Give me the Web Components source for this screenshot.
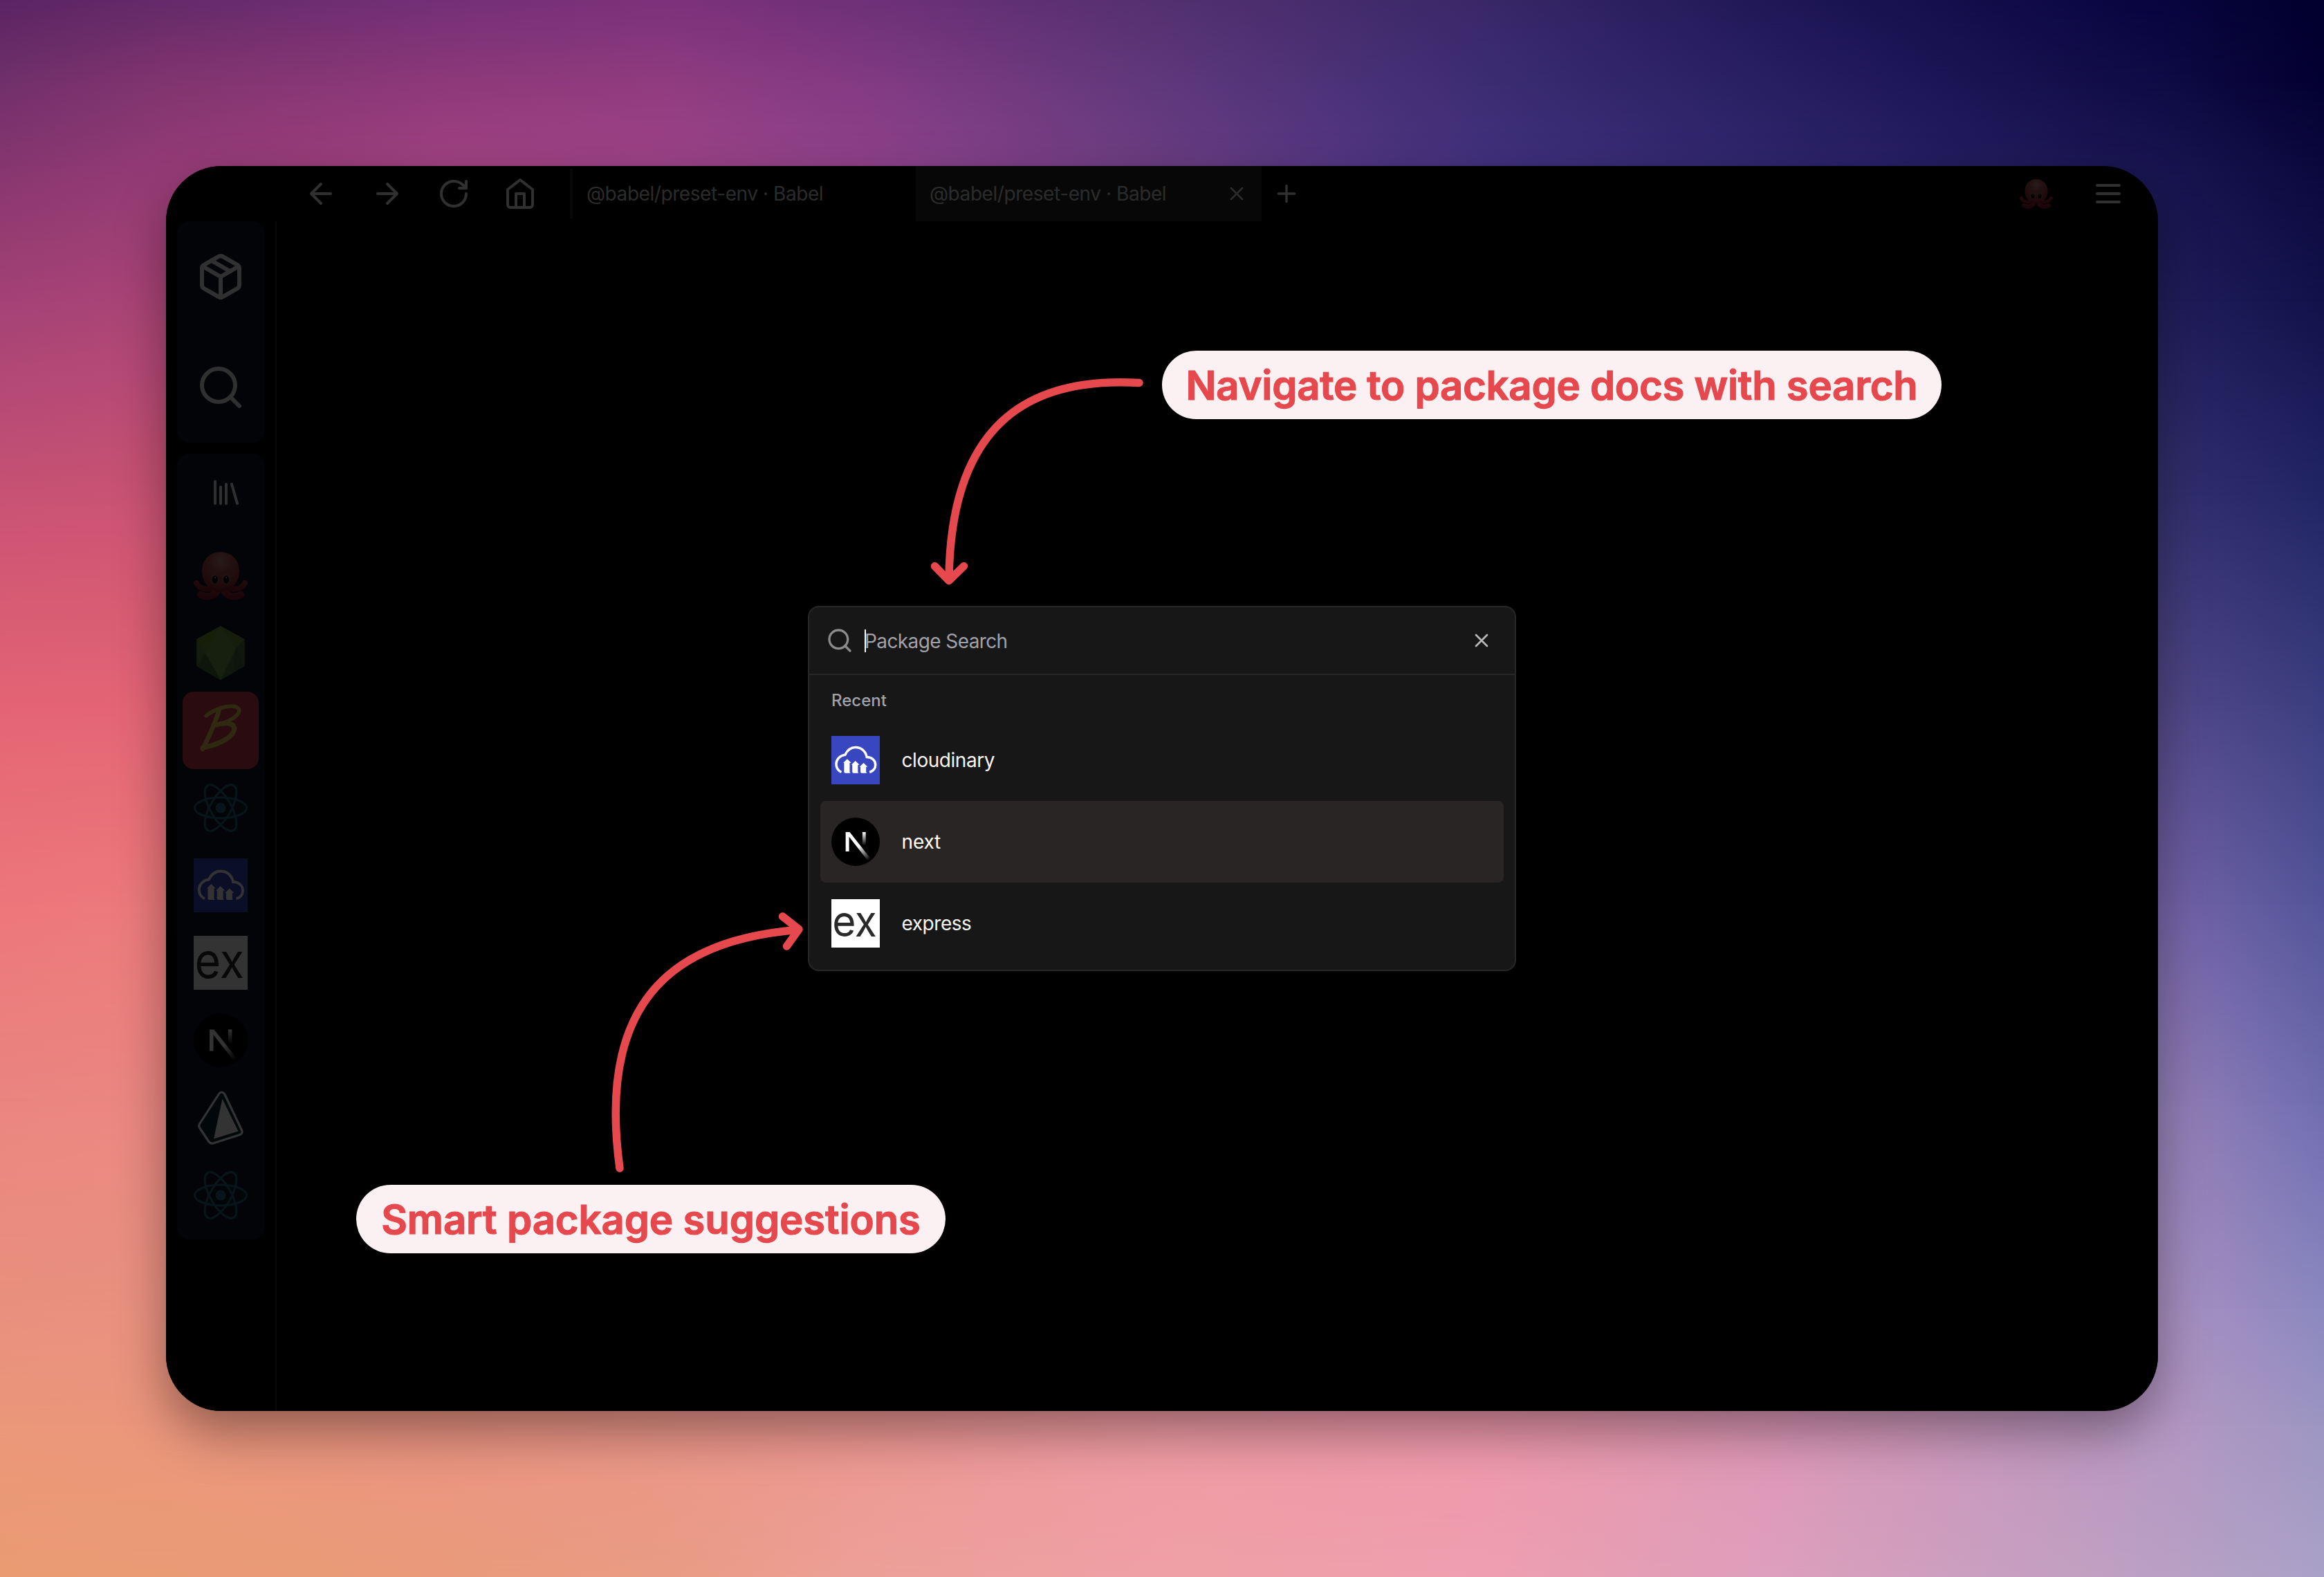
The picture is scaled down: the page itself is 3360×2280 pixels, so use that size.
<!DOCTYPE html>
<html lang="en">
<head>
<meta charset="utf-8">
<title>Package Search</title>
<style>
  html, body { margin: 0; height: 100%; }
  body { width: 3360px; height: 2280px; overflow: hidden; background: #000; font-family: Inter, "Liberation Sans", sans-serif; }
</style>
</head>
<body>
<promo-stage>
  <app-window>
    <tool-bar slot="toolbar">
      <ui-icon slot="nav" name="back"></ui-icon>
      <ui-icon slot="nav" name="forward"></ui-icon>
      <ui-icon slot="nav" name="reload"></ui-icon>
      <ui-icon slot="nav" name="home"></ui-icon>
      <browser-tab slot="tabs">@babel/preset-env · Babel</browser-tab>
      <browser-tab slot="tabs" active>@babel/preset-env · Babel</browser-tab>
      <ui-icon slot="tabs" name="plus" style="--size:40px;margin-left:16px"></ui-icon>
      <pkg-logo slot="end" name="octopus" style="--size:48px"></pkg-logo>
      <ui-icon slot="end" name="menu"></ui-icon>
    </tool-bar>
    <side-bar slot="sidebar">
      <ui-icon slot="main" name="package" style="--size:72px"></ui-icon>
      <ui-icon slot="main" name="search" style="--size:72px"></ui-icon>
      <ui-icon slot="library" name="library"></ui-icon>
      <side-item name="octopus"></side-item>
      <side-item name="node"></side-item>
      <side-item name="babel" active></side-item>
      <side-item name="react"></side-item>
      <side-item name="cloudinary"></side-item>
      <side-item name="express"></side-item>
      <side-item name="next"></side-item>
      <side-item name="prisma"></side-item>
      <side-item name="react"></side-item>
    </side-bar>
    <search-dialog slot="dialog" placeholder="Package Search" heading="Recent">
      <result-row name="cloudinary">cloudinary</result-row>
      <result-row name="next" selected>next</result-row>
      <result-row name="express">express</result-row>
    </search-dialog>
  </app-window>
  <call-out slot="notes" style="left:1680px;top:507px;width:1127px;letter-spacing:-.24px">Navigate to package docs with search</call-out>
  <call-out slot="notes" style="left:515px;top:1713px;width:852px;letter-spacing:-.1px">Smart package suggestions</call-out>
  <curved-arrow slot="notes" style="left:1320px;top:520px" w="360" h="350" line="M327 33.500C180 25 55 80 52 316" head="M31.500 298.500L52 319.500L73.500 298.500"></curved-arrow>
  <curved-arrow slot="notes" style="left:860px;top:1300px" w="320" h="420" line="M36 389C4 155 105 60 292 44.500" head="M271.500 25L295 43.500L277.500 68"></curved-arrow>
</promo-stage>

<script>
const define = (tag, html, setup) => {
  const tpl = document.createElement('template');
  tpl.innerHTML = html;
  customElements.define(tag, class extends HTMLElement {
    constructor() {
      super();
      this.attachShadow({ mode: 'open' }).append(tpl.content.cloneNode(true));
    }
    connectedCallback() { if (setup) setup(this, this.shadowRoot); }
  });
};

const ICONS = {
  back: '<path d="M19 12H5M12 19l-7-7 7-7"/>',
  forward: '<path d="M5 12h14M12 5l7 7-7 7"/>',
  reload: '<path d="M21 12a9 9 0 1 1-9-9c2.520 0 4.930 1 6.740 2.740L21 8"/><path d="M21 3v5h-5"/>',
  home: '<path d="m3 9 9-7 9 7v11a2 2 0 0 1-2 2H5a2 2 0 0 1-2-2z"/><path d="M9 22V12h6v10"/>',
  plus: '<path d="M5 12h14M12 5v14"/>',
  close: '<path d="M18 6 6 18M6 6l12 12"/>',
  menu: '<path d="M4 6h16M4 12h16M4 18h16"/>',
  search: '<circle cx="11" cy="11" r="8"/><path d="m21 21-4.350-4.350"/>',
  library: '<path d="m16 6 4 14M12 6v14M8 8v12M4 4v16"/>',
  package: '<path d="M16.500 9.400 7.500 4.210"/><path d="M21 16V8a2 2 0 0 0-1-1.730l-7-4a2 2 0 0 0-2 0l-7 4A2 2 0 0 0 3 8v8a2 2 0 0 0 1 1.730l7 4a2 2 0 0 0 2 0l7-4A2 2 0 0 0 21 16z"/><path d="M3.270 6.960 12 12.010l8.730-5.050M12 22.080V12"/>'
};

define('ui-icon', `
  <style>
    :host { display: block; width: var(--size, 48px); height: var(--size, 48px); color: #f0f0f0; flex: none; }
    svg { display: block; width: 100%; height: 100%; overflow: visible; fill: none; stroke: currentColor; stroke-width: 2; stroke-linecap: round; stroke-linejoin: round; }
  </style>
  <svg viewBox="0 0 24 24"></svg>`,
  (el, root) => { root.querySelector('svg').innerHTML = ICONS[el.getAttribute('name')]; });

const LOGOS = {
  octopus: `
    <defs>
      <radialGradient id="h" cx=".5" cy=".22" r=".75"><stop offset="0" stop-color="#c48a84"/><stop offset=".35" stop-color="#ad5654"/><stop offset=".8" stop-color="#a0343c"/><stop offset="1" stop-color="#7c202b"/></radialGradient>
      <linearGradient id="t" x1="0" y1="0" x2="0" y2="1"><stop offset="0" stop-color="#a02c37"/><stop offset="1" stop-color="#8c1c2b"/></linearGradient>
    </defs>
    <g fill="none" stroke="url(#t)" stroke-linecap="round" stroke-linejoin="round">
      <path stroke-width="8" d="M4 50C8 58 16 60 30 58M74 50C70 58 62 60 48 58"/>
      <path stroke-width="10" d="M10 67C18 71 28 70 33 63M68 67C60 71 50 70 45 63"/>
    </g>
    <path fill="url(#h)" d="M39 5C55 5 66 17 66 32C66 46 60 52 55 57C50 65 28 65 23 57C18 52 12 46 12 32C12 17 23 5 39 5z"/>
    <g fill="#8f6f68"><ellipse cx="30.500" cy="44.500" rx="5.600" ry="7"/><ellipse cx="47.500" cy="44.500" rx="5.600" ry="7"/></g>
    <g fill="#0a0505"><ellipse cx="30.800" cy="45" rx="4.200" ry="5.700"/><ellipse cx="47.200" cy="45" rx="4.200" ry="5.700"/></g>
    <g fill="#bbb"><circle cx="31" cy="42" r="1.100"/><circle cx="47" cy="42" r="1.100"/></g>`,
  node: `
    <path fill="#6f983a" d="M39 0 73.500 19V58L39 78 4.500 58V19z"/>
    <path fill="#7a9c56" d="M39 0 62 35 39 78 13 29z" opacity=".6"/>
    <path fill="#628740" d="M4.500 19 39 78 4.500 58z"/>
    <path fill="#446d36" d="M17 40 39 78 4.500 58z"/>
    <path fill="#527b43" d="M62 30 73.500 19V58L39 78z"/>
    <path fill="#40693d" d="M62 30 73.500 58 56 68z"/>
    <path fill="#6d9536" d="M39 0 4.500 19 18 37z"/>`,
  babel: `
    <g fill="none" stroke="#e6cc50" stroke-linecap="round" stroke-linejoin="round">
      <path stroke-width="5.500" d="M18 18C30 8 48 2 60 4.500C74 9 62 24 33 31"/>
      <path stroke-width="7" d="M33 31C50 26 62 30 58 40C53 52 33 60 13 64"/>
      <path stroke-width="6.500" d="M37 9C32 26 24 44 13 66"/>
    </g>`,
  react: `
    <g fill="none" stroke="#276880" stroke-width="3.200">
      <ellipse cx="39" cy="39" rx="37.500" ry="15"/>
      <ellipse cx="39" cy="39" rx="37.500" ry="15" transform="rotate(60 39 39)"/>
      <ellipse cx="39" cy="39" rx="37.500" ry="15" transform="rotate(120 39 39)"/>
    </g>
    <circle cx="39" cy="39" r="7.500" fill="#276880"/>`,
  cloudinary: `
    <path fill="#3847c0" d="M0 0h78v78H0z"/>
    <path fill="none" stroke="#fff" stroke-width="3.900" d="M16 58.500C10 55.500 7.500 50 7.800 44.500C8.400 37 14 31.500 22 30.500C26 22.500 32 18.500 39 18.500C47.500 18.500 55 24 57 34C65 34 71 39.500 71 46.500C71 52.500 67.500 56.500 61.500 58.500"/>
    <g fill="#fff">
      <path d="M25.500 37 32 43.500H29.500V58a2 2 0 0 0 2 2H22.500a2 2 0 0 1-2-2V43.500H19z"/>
      <path d="M38.700 40 45.200 46.500H42.700V58a2 2 0 0 0 2 2H35.700a2 2 0 0 1-2-2V46.500H32.200z"/>
      <path d="M51.900 43.500 58.400 50H55.900V58a2 2 0 0 0 2 2H48.900a2 2 0 0 1-2-2V50H45.400z"/>
    </g>`,
  express: `
    <path fill="#fff" d="M0 0h78v78H0z"/>
    <text x="1.500" y="60.500" font-family="Inter, sans-serif" font-weight="400" font-size="70" textLength="71.500" lengthAdjust="spacingAndGlyphs" fill="#2a2a2a">ex</text>`,
  next: `
    <defs>
      <linearGradient id="d" gradientUnits="userSpaceOnUse" x1="44" y1="46" x2="61" y2="68"><stop offset="0" stop-color="#fff"/><stop offset="1" stop-color="#fff" stop-opacity="0"/></linearGradient>
      <linearGradient id="v" x1="0" y1="0" x2="0" y2="1"><stop offset="0" stop-color="#fff"/><stop offset="1" stop-color="#fff" stop-opacity="0"/></linearGradient>
    </defs>
    <circle cx="39" cy="39" r="39"/>
    <path fill="url(#d)" d="M23 23.400h6.500L63.500 66.500 59 70 28.500 31V54.600H23z"/>
    <path fill="url(#v)" d="M50 23.400h5.400V45H50z"/>`,
  prisma: `
    <path fill="#0c2434" stroke="#fff" stroke-width="3.200" stroke-linejoin="round" d="M36.500 4.500Q40.500-.5 44.500 4.500L69.500 57Q71.500 61.500 67 63.500L28 76Q24.500 77 21.500 73L8.500 53.500Q7 50.500 8.500 48z"/>
    <path fill="#fff" d="M41.500 11.500 64.500 58.500 29 69.500z"/>`
};

define('pkg-logo', `
  <style>
    :host { display: block; width: var(--size, 78px); height: var(--size, 78px); flex: none; }
    svg { display: block; width: 100%; height: 100%; overflow: visible; }
  </style>
  <svg viewBox="0 0 78 78"></svg>`,
  (el, root) => { root.querySelector('svg').innerHTML = LOGOS[el.getAttribute('name')]; });

define('browser-tab', `
  <style>
    :host { display: flex; align-items: center; box-sizing: border-box; width: 500px; height: 80px; flex: none; color: #d6d6d6; font-size: 28px; letter-spacing: -.43px; white-space: nowrap; }
    i { width: 4px; height: 72px; background: #262626; margin-right: 20px; }
    span { flex: 1; }
    ui-icon { display: none; --size: 32px; color: #d6d6d6; margin-right: 20px; }
    :host([active]) { background: #262626; }
    :host([active]) i { width: 0; }
    :host([active]) ui-icon { display: block; }
  </style>
  <i></i><span><slot></slot></span><ui-icon name="close"></ui-icon>`);

define('tool-bar', `
  <style>
    :host { display: flex; align-items: center; height: 80px; padding: 0 48px 0 200px; }
    .nav { display: flex; gap: 48px; margin-right: 48px; }
    .tabs { display: flex; align-items: center; flex: 1; }
    .end { display: flex; align-items: center; gap: 56px; }
  </style>
  <div class="nav"><slot name="nav"></slot></div>
  <div class="tabs"><slot name="tabs"></slot></div>
  <div class="end"><slot name="end"></slot></div>`);

define('side-item', `
  <style>
    :host { display: flex; align-items: center; justify-content: center; width: 110px; height: 112px; border-radius: 16px; }
    :host([active]) { background: #d0374f; }
  </style>
  <pkg-logo></pkg-logo>`,
  (el, root) => {
    const logo = document.createElement('pkg-logo');
    logo.setAttribute('name', el.getAttribute('name'));
    root.querySelector('pkg-logo').replaceWith(logo);
  });

define('side-bar', `
  <style>
    :host { display: flex; flex-direction: column; gap: 16px; box-sizing: border-box; width: 160px; height: 100%; padding: 0 16px; border-right: 2px solid #2c2c2c; }
    section { display: flex; flex-direction: column; align-items: center; width: 126px; border-radius: 16px; background: #0c1424; }
    .main { height: 320px; justify-content: space-around; }
    .list { padding-bottom: 8px; }
    .lib { display: flex; align-items: center; justify-content: center; height: 112px; margin-bottom: 8px; padding-left: 15px; }
  </style>
  <section class="main"><slot name="main"></slot></section>
  <section class="list"><div class="lib"><slot name="library"></slot></div><slot></slot></section>`);

define('result-row', `
  <style>
    :host { display: flex; align-items: center; gap: 31.500px; height: 118px; padding: 0 16px; border-radius: 8px; color: #f5f5f5; font-size: 28px; letter-spacing: -.45px; }
    :host([selected]) { background: #292524; color: #fff; letter-spacing: -.16px; }
    pkg-logo { --size: 70px; }
  </style>
  <slot name="logo"></slot><slot></slot>`,
  (el, root) => {
    const logo = document.createElement('pkg-logo');
    logo.setAttribute('name', el.getAttribute('name'));
    root.querySelector('slot').replaceWith(logo);
  });

define('search-dialog', `
  <style>
    :host { display: block; box-sizing: border-box; width: 1024px; height: 528px; border: 2px solid #272727; border-radius: 16px; background: #171717; overflow: hidden; }
    header { display: flex; align-items: center; height: 96px; padding: 0 32px 0 24px; border-bottom: 2px solid #272727; }
    header ui-icon { --size: 40px; color: #8b8b8b; }
    .caret { width: 2px; height: 33px; margin-left: 16px; background: #fff; }
    .field { flex: 1; margin-left: -2px; padding-top: 2px; color: #a1a1aa; font-size: 28px; letter-spacing: -.6px; }
    header .close { --size: 32px; color: #b8b8b8; }
    main { padding: 8px 16px; }
    h2 { margin: 0; box-sizing: border-box; height: 56px; line-height: 56px; padding: 1px 0 0 16px; font-size: 24px; font-weight: 500; color: #a1a1aa; letter-spacing: 0; }
  </style>
  <header>
    <ui-icon name="search"></ui-icon><div class="caret"></div><div class="field"></div><ui-icon class="close" name="close"></ui-icon>
  </header>
  <main><h2></h2><slot></slot></main>`,
  (el, root) => {
    root.querySelector('.field').textContent = el.getAttribute('placeholder');
    root.querySelector('h2').textContent = el.getAttribute('heading');
  });

define('app-window', `
  <style>
    :host { display: grid; grid-template-rows: 80px 1fr; position: relative; width: 2880px; height: 1800px; border-radius: 80px; overflow: hidden; background: #000; }
    .body { display: flex; min-height: 0; }
    .overlay { position: absolute; inset: 0; display: flex; align-items: center; justify-content: center; background: rgba(0, 0, 0, .8); }
  </style>
  <slot name="toolbar"></slot>
  <div class="body"><slot name="sidebar"></slot></div>
  <div class="overlay"><slot name="dialog"></slot></div>`);

define('call-out', `
  <style>
    :host { display: flex; align-items: center; justify-content: center; position: absolute; height: 99px; border-radius: 50px; background: #fbf0f2; color: #e5484d; font-size: 58px; font-weight: 600; white-space: nowrap; -webkit-text-stroke: 1.200px #e5484d; }
  </style>
  <slot></slot>`);

define('curved-arrow', `
  <style>
    :host { display: block; position: absolute; }
    svg { display: block; fill: none; stroke: #e5484d; stroke-width: 11.500; stroke-linecap: round; stroke-linejoin: round; overflow: visible; }
  </style>
  <svg><path/><path/></svg>`,
  (el, root) => {
    const svg = root.querySelector('svg');
    svg.setAttribute('width', el.getAttribute('w'));
    svg.setAttribute('height', el.getAttribute('h'));
    svg.children[0].setAttribute('d', el.getAttribute('line'));
    svg.children[1].setAttribute('d', el.getAttribute('head'));
  });

/* Colour mesh: every row is a horizontal gradient anchored at one height; masks fade each row into the next. */
const X = [0, 240, 643, 964, 1286, 1680, 2143, 2571, 3120, 3360];
const MESH = [
  [0, '#5a2462 #642a69 #733076 #7b3279 #6c3078 #533070 #392868 #1f1755 #080440 #02002c'],
  [120, '#70306b #81356f #8e397a #913c80 #803b82 #5f387c #3c2d73 #271e61 #0f0b45 #040032'],
  [240, '#86366f #933b76 #a04281 #9c4388 #8c4289 #6a3d82 #41317e #2e256c #19144f #0b083e'],
  [436, '#a44276 #ab4577 #a04281 #9c4388 #8c4289 #683c82 #403180 #2c246e #211e5c #12124a'],
  [727, '#c95374 #cb5473 #b05080 #a05080 #905080 #704080 #504080 #403880 #35316f #222666'],
  [1018, '#e46474 #e46575 #d06080 #c06080 #b06080 #906090 #705090 #605090 #534888 #3a3e80'],
  [1309, '#ec777b #ec7b7c #e07080 #d07080 #c07090 #a07090 #9070a0 #8068a0 #7664a8 #53559a'],
  [1600, '#ea8680 #eb8882 #e88888 #e08890 #e08898 #d088a0 #b080a0 #a080a8 #9580b8 #706eb0'],
  [1891, '#ea907e #e99280 #ec9088 #ec9090 #ee9298 #ee94a0 #e090a8 #c890b8 #a98fc0 #8b88c0'],
  [2060, '#ea977a #ea967c #ea9482 #eb9689 #ed9792 #ee9ba4 #ee98aa #dd98b6 #b597c2 #9c96c2'],
  [2280, '#ea9b71 #ea9c74 #ea9b7b #ea9c84 #eda09a #f0a0a6 #ef9fb0 #dd9fbc #bba0c4 #aaa2c8']
];

define('mesh-backdrop', `
  <style>
    :host { display: block; position: absolute; inset: 0; overflow: hidden; }
    div { position: absolute; inset: 0; }
  </style>`,
  (el, root) => {
    for (let i = MESH.length - 1; i >= 0; i--) {
      const [y, row] = MESH[i];
      const layer = document.createElement('div');
      layer.style.background = `linear-gradient(90deg, ${row.split(' ').map((c, k) => `${c} ${X[k]}px`).join(', ')})`;
      if (i < MESH.length - 1) layer.style.maskImage = `linear-gradient(#000 ${y}px, transparent ${MESH[i + 1][0]}px)`;
      root.append(layer);
    }
  });

define('promo-stage', `
  <style>
    :host { display: grid; place-items: center; position: relative; width: 3360px; height: 2280px; }
    .frame { position: relative; border-radius: 80px; box-shadow: 0 30px 72px rgba(0, 0, 0, .38); }
  </style>
  <mesh-backdrop></mesh-backdrop>
  <div class="frame"><slot></slot></div>
  <slot name="notes"></slot>`);
</script>
</body>
</html>
